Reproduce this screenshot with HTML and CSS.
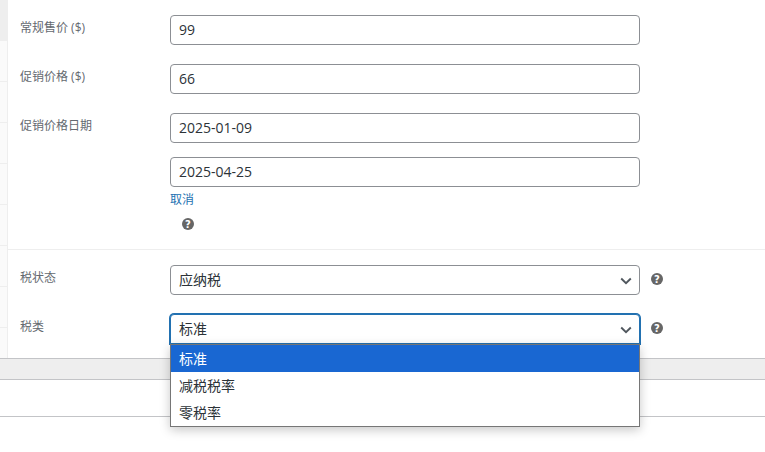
FILE: index.html
```html
<!DOCTYPE html>
<html lang="zh-CN">
<head>
<meta charset="utf-8">
<title>商品数据</title>
<link rel="stylesheet" href="styles.css">
</head>
<body>
<div class="panel">
  <div class="tabs">
    <div class="tab tab-active"></div>
    <div class="tab"></div><div class="tab"></div><div class="tab"></div><div class="tab"></div>
    <div class="tab"></div><div class="tab"></div><div class="tab"></div><div class="tab tab-last"></div>
  </div>
  <div class="content">
    <div class="group group-pricing">
      <div class="row row-price">
        <label class="label">常规售价 ($)</label>
        <div class="field"><div class="input">99</div></div>
      </div>
      <div class="row row-price">
        <label class="label">促销价格 ($)</label>
        <div class="field"><div class="input">66</div></div>
      </div>
      <div class="row">
        <label class="label">促销价格日期</label>
        <div class="field dates">
          <div class="input">2025-01-09</div>
          <div class="input">2025-04-25</div>
          <a class="cancel" href="#">取消</a>
          <svg class="help help-date" viewBox="0 0 12 12" aria-hidden="true"><circle cx="6" cy="6" r="6" fill="#666"/><text x="6" y="9.5" class="help-mark">?</text></svg>
        </div>
      </div>
    </div>
    <div class="group group-tax">
      <div class="row row-tax">
        <label class="label">税状态</label>
        <div class="field field-select">
          <div class="input select"><span>应纳税</span><svg class="chev" viewBox="0 0 12 8" aria-hidden="true"><path d="M1.2 1.5 6 6.2l4.8-4.7" fill="none" stroke="#50575e" stroke-width="1.9"/></svg></div>
          <svg class="help help-select" viewBox="0 0 12 12" aria-hidden="true"><circle cx="6" cy="6" r="6" fill="#666"/><text x="6" y="9.5" class="help-mark">?</text></svg>
        </div>
      </div>
      <div class="row row-tax">
        <label class="label">税类</label>
        <div class="field field-select">
          <div class="select-wrap">
            <div class="input select select-open"><span>标准</span><svg class="chev" viewBox="0 0 12 8" aria-hidden="true"><path d="M1.2 1.5 6 6.2l4.8-4.7" fill="none" stroke="#50575e" stroke-width="1.9"/></svg></div>
            <ul class="menu">
              <li class="option option-on">标准</li>
              <li class="option">减税税率</li>
              <li class="option">零税率</li>
            </ul>
          </div>
          <svg class="help help-select" viewBox="0 0 12 12" aria-hidden="true"><circle cx="6" cy="6" r="6" fill="#666"/><text x="6" y="9.5" class="help-mark">?</text></svg>
        </div>
      </div>
    </div>
  </div>
</div>
<div class="band"></div>
<div class="blank"></div>
</body>
</html>
```
FILE: styles.css
```css
* { box-sizing: border-box; }
html, body { margin: 0; padding: 0; background: #fff; }
body {
  width: 765px;
  height: 452px;
  overflow: hidden;
  font-family: "Open Sans", "Noto Sans CJK SC", sans-serif;
  font-size: 14px;
  color: #2c3338;
}
.panel { display: flex; height: 358px; }
.tabs {
  width: 8px;
  flex: none;
  background: #fafafa;
  border-right: 1px solid #eee;
  display: flex;
  flex-direction: column;
}
.tab { height: 41px; flex: none; border-bottom: 1px solid #eee; }
.tab-active { background: #eee; }
.tab-last { border-bottom: 0; }
.content { flex: 1; min-width: 0; }
.group-pricing { height: 250px; padding-top: 15px; border-bottom: 1px solid #eee; }
.group-tax { padding-top: 15px; }
.row { display: flex; padding-left: 12px; }
.row-price { margin-bottom: 19px; }
.row-tax { margin-bottom: 19px; }
.label {
  width: 150px;
  flex: none;
  padding-top: 4px;
  font-size: 12px;
  line-height: 18px;
  color: #646970;
}
.field { width: 470px; flex: none; }
.input {
  width: 470px;
  height: 30px;
  padding: 0 8px;
  border: 1px solid #8c8f94;
  border-radius: 4px;
  background: #fff;
  line-height: 28px;
  color: #2c3338;
}
.dates .input + .input { margin-top: 14px; }
.cancel {
  display: block;
  margin-top: 4px;
  font-size: 12px;
  line-height: 18px;
  color: #2271b1;
  text-decoration: none;
}
.help { width: 12px; height: 12px; flex: none; display: block; }
.help-date { margin: 9px 0 0 12px; }
.help-select { margin-top: -2px; }
.help-mark {
  font-family: "DejaVu Sans", sans-serif;
  font-size: 10px;
  font-weight: 700;
  text-anchor: middle;
  fill: #fff;
}
.field-select { display: flex; align-items: center; gap: 11px; width: auto; }
.select { display: flex; align-items: center; justify-content: space-between; padding-right: 7px; }
.chev { width: 12px; height: 8px; display: block; margin-top: 2px; }
.select-wrap { position: relative; width: 470px; flex: none; }
.select-open {
  border-color: #2271b1;
  box-shadow: 0 0 0 1px #2271b1;
  border-radius: 4px 4px 0 0;
}
.menu {
  position: absolute;
  left: 0;
  top: 30px;
  width: 470px;
  margin: 0;
  padding: 0;
  list-style: none;
  background: #fff;
  border: 1px solid #767676;
  box-shadow: 0 3px 10px rgba(0, 0, 0, .22);
  z-index: 2;
}
.option {
  height: 27px;
  padding: 0 8px;
  line-height: 27px;
  color: #2c3338;
}
.option-on { background: #1967d2; color: #fff; }
.band {
  height: 22px;
  background: #eee;
  border-top: 1px solid #c3c4c7;
  border-bottom: 1px solid #c3c4c7;
}
.blank { height: 37px; border-bottom: 1px solid #c3c4c7; }
```
